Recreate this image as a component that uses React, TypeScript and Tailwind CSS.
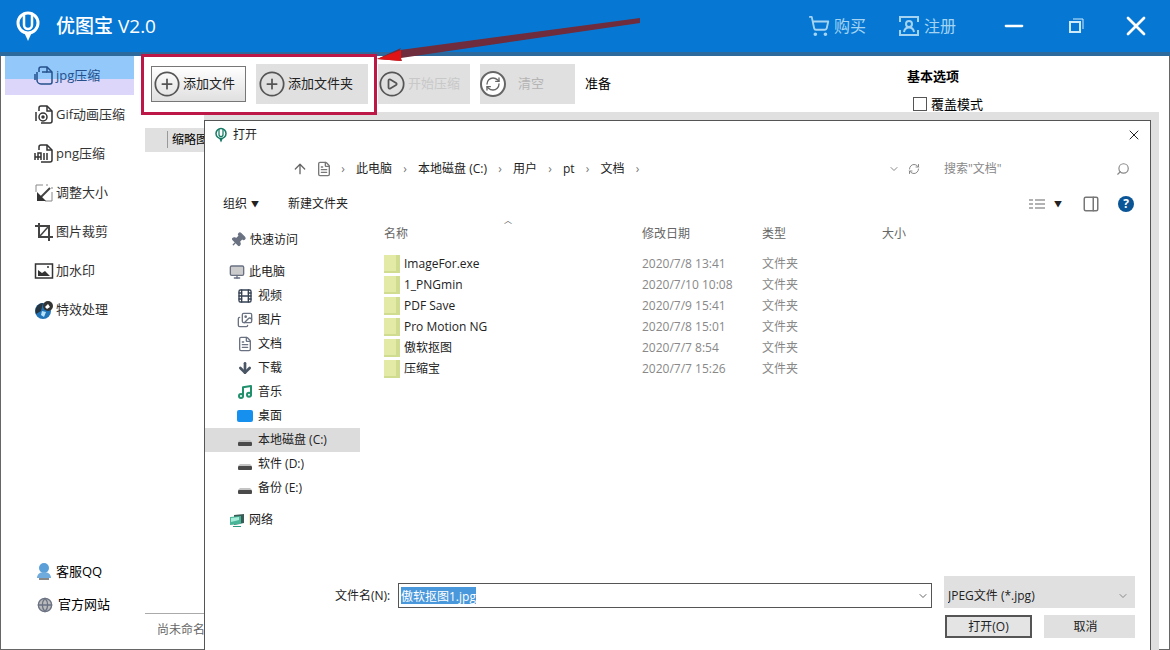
import React, { useState } from 'react';
import {
    ArrowDown,
    ArrowUp,
    ChevronDown,
    CirclePlay,
    CirclePlus,
    FileText,
    Film,
    Globe,
    Images,
    Minus,
    Monitor,
    Music,
    PanelRight,
    Pin,
    RefreshCw,
    Search,
    ShoppingCart,
    X,
} from 'lucide-react';

interface FileRow {
    name: string;
    date: string;
}

const files: FileRow[] = [
    { name: 'ImageFor.exe', date: '2020/7/8 13:41' },
    { name: '1_PNGmin', date: '2020/7/10 10:08' },
    { name: 'PDF Save', date: '2020/7/9 15:41' },
    { name: 'Pro Motion NG', date: '2020/7/8 15:01' },
    { name: '傲软抠图', date: '2020/7/7 8:54' },
    { name: '压缩宝', date: '2020/7/7 15:26' },
];

const crumbs = ['此电脑', '本地磁盘 (C:)', '用户', 'pt', '文档'];

function Logo({ className }: { className: string }) {
    return (
        <svg viewBox="0 0 24 32" className={className} fill="none" stroke="currentColor">
            <circle cx="12" cy="13" r="10" strokeWidth="3" />
            <path d="M8 4v11a4 4 0 0 0 8 0V4" strokeWidth="2.500" />
            <path d="M8 22h8l-4 9z" fill="currentColor" stroke="none" />
        </svg>
    );
}

// page outline, each format with its own mark over the left edge
function FileBadge({ kind }: { kind: 'jpg' | 'gif' | 'png' }) {
    return (
        <svg viewBox="0 0 20 20" className="h-5 w-5" fill="none" stroke="currentColor" strokeWidth="1.500">
            <path d="M5 6V3a2 2 0 0 1 2-2h6l5 5v10a2 2 0 0 1-2 2H7" />
            <path d="M13 1v5h5" />
            {kind === 'jpg' && <path d="M3 6v8a4 4 0 0 0 4 4M1 8v6M8 6h5" />}
            {kind === 'gif' && (
                <>
                    <circle cx="9" cy="12" r="4" />
                    <circle cx="9" cy="12" r="1" fill="currentColor" />
                    <path d="M2 7v9" />
                </>
            )}
            {kind === 'png' && <path d="M1 16V9M4 16V9h3v7M10 16V9M13 9v7M1 13h6" />}
        </svg>
    );
}

function ResizeIcon() {
    return (
        <svg viewBox="0 0 20 20" className="h-5 w-5" fill="none" stroke="#444" strokeWidth="1.500">
            <path d="M2 9V2h7M12 2h2M18 4v2M18 9v9h-7" strokeWidth="1" stroke="#888" />
            <path d="M16 5l-9 9" strokeWidth="2" />
            <path d="M3 9v9h9z" fill="#333" stroke="none" />
        </svg>
    );
}

function CropIcon() {
    return (
        <svg viewBox="0 0 20 20" className="h-5 w-5" fill="none" stroke="#444" strokeWidth="2">
            <path d="M5 1v14h14M1 4h14v15" />
            <path d="M6 14l8-9" strokeWidth="1.500" />
        </svg>
    );
}

function PictureIcon() {
    return (
        <svg viewBox="0 0 20 20" className="h-5 w-5" fill="none" stroke="#333" strokeWidth="1.500">
            <rect x="1.500" y="3" width="17" height="14" />
            <path d="M4 15V9l4 3 3-2 5 5z" fill="#333" stroke="none" />
            <path d="M13 6h2" />
        </svg>
    );
}

function EffectIcon() {
    return (
        <svg viewBox="0 0 20 20" className="h-5 w-5">
            <circle cx="9" cy="11" r="8" fill="#2274b8" />
            <path d="M9 3a8 8 0 0 0-7 11l5-3z" fill="#26343f" />
            <circle cx="14" cy="6" r="5" fill="#333" />
            <path d="M11 7l3-3 2 3-3 2z" fill="#fff" />
            <path d="M8 11l4 1-2 5-3-2z" fill="#b9e2fb" />
        </svg>
    );
}

function DriveIcon() {
    return (
        <svg viewBox="0 0 16 16" className="h-4 w-4">
            <path d="M3 8h10l2 2H1z" fill="#c4c4c4" />
            <rect x="1" y="10" width="14" height="4" rx="1" fill="#4a4a4a" />
        </svg>
    );
}

function NetworkIcon() {
    return (
        <svg viewBox="0 0 16 16" className="h-4 w-4">
            <path d="M5 3l10-1v9l-10 2z" fill="#3d5b56" />
            <path d="M1 5l11-1v8l-11 1z" fill="#49b598" />
            <path d="M2 6l8-1v3l-8 2z" fill="#a6ecd9" />
            <path d="M4 14h8v1H4z" fill="#2c9880" />
        </svg>
    );
}

const sideItems = [
    { label: 'jpg压缩', icon: <FileBadge kind="jpg" /> },
    { label: 'Gif动画压缩', icon: <FileBadge kind="gif" /> },
    { label: 'png压缩', icon: <FileBadge kind="png" /> },
    { label: '调整大小', icon: <ResizeIcon /> },
    { label: '图片裁剪', icon: <CropIcon /> },
    { label: '加水印', icon: <PictureIcon /> },
    { label: '特效处理', icon: <EffectIcon /> },
];

const places = [
    { label: '视频', icon: <Film className="h-4 w-4 text-gray-700" /> },
    { label: '图片', icon: <Images className="h-4 w-4 text-gray-500" /> },
    { label: '文档', icon: <FileText className="h-4 w-4 text-gray-500" /> },
    { label: '下载', icon: <ArrowDown className="h-4 w-4 text-gray-600" strokeWidth={4} /> },
    { label: '音乐', icon: <Music className="h-4 w-4 text-[#20906c]" strokeWidth={3} /> },
    { label: '桌面', icon: <span className="block h-3 w-4 rounded-xs bg-[#1690ee]" /> },
    { label: '本地磁盘 (C:)', icon: <DriveIcon /> },
    { label: '软件 (D:)', icon: <DriveIcon /> },
    { label: '备份 (E:)', icon: <DriveIcon /> },
];

function TitleBar() {
    return (
        <header className="flex h-14 shrink-0 items-center border-b-4 border-[#2c6a9e] bg-[#0678d4] pr-[18px] pl-4 text-white">
            <Logo className="h-8 w-6" />
            <h1 className="ml-4 text-[19px] font-medium">优图宝 V2.0</h1>
            <div className="ml-auto flex items-center text-base text-[#a4d4f2]">
                <button className="flex items-center gap-1">
                    <ShoppingCart className="h-[22px] w-[22px]" strokeWidth={2} />
                    购买
                </button>
                <button className="ml-8 flex items-center gap-1">
                    <svg viewBox="0 0 22 22" className="h-[22px] w-[22px]" fill="none" stroke="currentColor" strokeWidth="2">
                        <path d="M2 7V2h18v5M2 15v5h18v-5" />
                        <circle cx="11" cy="9" r="3" />
                        <path d="M6 17c1-6 9-6 10 0" />
                    </svg>
                    注册
                </button>
                <button aria-label="最小化" className="ml-11 text-white">
                    <Minus className="h-7 w-7" strokeWidth={2} />
                </button>
                <button aria-label="最大化" className="ml-10 text-[#cdeafa]">
                    <svg viewBox="0 0 16 16" className="h-4 w-4" fill="none" stroke="currentColor" strokeWidth="2">
                        <rect x="2" y="4" width="10" height="10" />
                        <path d="M5 1h10v10" strokeWidth="1" />
                    </svg>
                </button>
                <button aria-label="关闭" className="ml-9 text-white">
                    <X className="h-8 w-8" strokeWidth={2} />
                </button>
            </div>
        </header>
    );
}

function Sidebar() {
    const [active, setActive] = useState('jpg压缩');

    return (
        <nav className="flex w-[133px] shrink-0 flex-col pl-1 text-[13px]">
            {sideItems.map(item => (
                <button
                    key={item.label}
                    onClick={() => setActive(item.label)}
                    className={`flex h-[39px] items-center gap-[2px] pl-[29px] whitespace-nowrap
                        ${active === item.label ? 'bg-linear-to-b from-[#93c9fa] from-60% to-[#dcd6fa] to-60% text-[#25508c]' : 'text-[#333]'}`}
                >
                    {item.icon}
                    {item.label}
                </button>
            ))}
            <div className="mt-auto flex flex-col pb-7">
                <a href="#qq" className="flex h-[33px] items-center gap-[2px] pl-[29px] text-black">
                    <svg viewBox="0 0 20 20" className="h-5 w-5">
                        <circle cx="10" cy="6" r="5" fill="#5a9fd8" />
                        <path d="M3 16c0-8 14-8 14 0z" fill="#6fabdc" />
                        <path d="M5 16h10v2H5z" fill="#888" />
                    </svg>
                    客服QQ
                </a>
                <a href="#site" className="flex h-[33px] items-center gap-[5px] pl-8 text-black">
                    <Globe className="h-4 w-4 text-gray-500" fill="#bbb" />
                    官方网站
                </a>
            </div>
        </nav>
    );
}

function Toolbar() {
    return (
        <div className="flex items-center gap-[10px] text-[13px] whitespace-nowrap">
            <button className="flex h-9 w-[95px] items-center gap-[2px] border border-[#777] bg-linear-to-b from-white to-[#e0e0e0] pl-[1px] text-[#222]">
                <CirclePlus className="h-7 w-7 text-[#555]" strokeWidth={1.5} />
                添加文件
            </button>
            <button className="flex h-10 w-28 items-center gap-[2px] bg-[#e0e0e0] pl-[2px] text-[#222]">
                <CirclePlus className="h-7 w-7 text-[#555]" strokeWidth={1.5} />
                添加文件夹
            </button>
            <button disabled className="flex h-10 w-[92px] items-center gap-[2px] bg-[#e0e0e0] text-[#c8c8c8]">
                <CirclePlay className="h-7 w-7 text-[#555]" strokeWidth={1.5} />
                开始压缩
            </button>
            <button disabled className="flex h-10 w-[95px] items-center gap-3 bg-[#e0e0e0] text-[#b4b4b4]">
                <span className="flex h-[26px] w-[26px] items-center justify-center rounded-full border-2 border-[#666] bg-white">
                    <RefreshCw className="h-4 w-4 text-[#666]" />
                </span>
                清空
            </button>
            <span className="text-black">准备</span>
        </div>
    );
}

function OpenDialog() {
    const [fileName, setFileName] = useState('傲软抠图1.jpg');
    const [place, setPlace] = useState('本地磁盘 (C:)');

    return (
        <section
            role="dialog"
            aria-label="打开"
            className="absolute top-[120px] right-[19px] bottom-0 left-[204px] flex flex-col border border-b-0 border-[#555] bg-white text-xs text-[#222] shadow-[4px_-4px_0_4px_#e0e0e0]"
        >
            <div className="flex h-7 items-center pr-2 pl-2">
                <Logo className="h-4 w-4 text-[#157a63]" />
                <span className="ml-1">打开</span>
                <button aria-label="关闭对话框" className="ml-auto">
                    <X className="h-4 w-4" strokeWidth={1.5} />
                </button>
            </div>

            <div className="flex h-10 items-center pr-5 pl-[87px]">
                <ArrowUp className="h-4 w-4 text-[#666]" strokeWidth={2} />
                <FileText className="mr-2 ml-2 h-4 w-4 text-[#777]" strokeWidth={2} />
                <div className="flex items-center gap-[10px]">
                    {crumbs.map(crumb => (
                        <React.Fragment key={crumb}>
                            <span className="w-[6px] text-center text-[#777]">›</span>
                            <a href="#path">{crumb}</a>
                        </React.Fragment>
                    ))}
                    <span className="w-[6px] text-center text-[#777]">›</span>
                </div>
                <ChevronDown className="ml-auto h-3 w-3 text-[#888]" />
                <RefreshCw className="ml-2 h-3 w-3 text-[#888]" />
                <input
                    aria-label="搜索"
                    placeholder="搜索&quot;文档&quot;"
                    className="ml-6 w-[172px] outline-none placeholder:text-[#888]"
                />
                <Search className="h-[14px] w-[14px] -scale-x-100 text-[#888]" strokeWidth={2} />
            </div>

            <div className="flex h-[30px] items-center pr-4 pl-[18px]">
                <button className="flex items-center gap-1">
                    组织 <span className="text-[8px]">▼</span>
                </button>
                <button className="ml-[29px]">新建文件夹</button>
                <button aria-label="更改视图" className="ml-auto flex items-center gap-2">
                    <svg viewBox="0 0 18 14" className="h-[14px] w-[18px]" fill="none" stroke="#999">
                        <path d="M1 3h4M1 7h4M1 11h4M7 3h10M7 7h10M7 11h10" strokeWidth="1.500" />
                    </svg>
                    <span className="text-[8px]">▼</span>
                </button>
                <button aria-label="预览窗格" className="ml-5 text-[#777]">
                    <PanelRight className="h-[18px] w-[18px]" strokeWidth={2} />
                </button>
                <button
                    aria-label="帮助"
                    className="ml-[18px] flex h-4 w-4 items-center justify-center rounded-full bg-[#0a5596] font-bold text-white"
                >
                    ?
                </button>
            </div>

            <div className="flex min-h-0 flex-1">
                <nav className="w-[179px] shrink-0 pt-[9px]">
                    <a href="#quick" className="flex h-6 items-center gap-1 pl-[25px]">
                        <Pin className="h-4 w-4 rotate-45 text-gray-500" fill="currentColor" />
                        快速访问
                    </a>
                    <a href="#pc" className="mt-2 flex h-6 items-center gap-1 pl-6">
                        <Monitor className="h-4 w-4 text-gray-500" fill="#ccc" />
                        此电脑
                    </a>
                    {places.map(item => (
                        <button
                            key={item.label}
                            onClick={() => setPlace(item.label)}
                            className={`flex h-6 w-[155px] items-center gap-[5px] pl-8 ${place === item.label ? 'bg-[#dcdcdc]' : ''}`}
                        >
                            {item.icon}
                            {item.label}
                        </button>
                    ))}
                    <a href="#net" className="mt-2 flex h-6 items-center gap-1 pl-6">
                        <NetworkIcon />
                        网络
                    </a>
                </nav>

                <div className="flex-1">
                    <table className="w-full table-fixed text-left">
                        <thead className="text-[#666]">
                            <tr className="h-[34px] align-top">
                                <th className="relative w-[258px] pt-[7px] font-normal">
                                    名称
                                    <span className="absolute -top-1 left-[120px] text-[8px]">︿</span>
                                </th>
                                <th className="w-[120px] pt-[7px] font-normal">修改日期</th>
                                <th className="w-[120px] pt-[7px] font-normal">类型</th>
                                <th className="pt-[7px] font-normal">大小</th>
                            </tr>
                        </thead>
                        <tbody>
                            {files.map(file => (
                                <tr key={file.name} className="h-[21px] text-[#888]">
                                    <td className="text-[#222]">
                                        <span className="flex items-center gap-1">
                                            <span className="h-[18px] w-4 border-r-4 border-b-2 border-[#d0dc90] bg-[#e2eaa6]" />
                                            {file.name}
                                        </span>
                                    </td>
                                    <td>{file.date}</td>
                                    <td>文件夹</td>
                                    <td />
                                </tr>
                            ))}
                        </tbody>
                    </table>
                </div>
            </div>

            <footer className="flex flex-col gap-[7px] pr-[15px] pb-3 pl-[130px]">
                <div className="flex items-end">
                    <label htmlFor="file-name" className="leading-[25px] whitespace-nowrap">
                        文件名(N):
                    </label>
                    <div className="relative ml-auto h-[25px] w-[534px] border border-[#555] p-[3px] pl-[2px]">
                        <input
                            id="file-name"
                            value={fileName}
                            onChange={e => setFileName(e.target.value)}
                            className="block field-sizing-content h-full bg-[#4a98dc] text-white outline-none"
                        />
                        <ChevronDown className="absolute top-[6px] right-[2px] h-3 w-3 text-[#666]" />
                    </div>
                    <div className="relative ml-3 w-[191px]">
                        <select aria-label="文件类型" className="h-8 w-full appearance-none bg-[#e0e0e0] pt-2 pl-1 text-[#222]">
                            <option>JPEG文件 (*.jpg)</option>
                        </select>
                        <ChevronDown className="pointer-events-none absolute top-[14px] right-[6px] h-3 w-3 text-[#888]" />
                    </div>
                </div>
                <div className="flex justify-end gap-3">
                    <button className="h-[23px] w-[87px] border-2 border-[#555] bg-[#e4e4e4]">打开(O)</button>
                    <button className="h-[23px] w-[91px] bg-[#e0e0e0] pr-2">取消</button>
                </div>
            </footer>
        </section>
    );
}

export default function App() {
    return (
        <div className="relative flex min-h-screen flex-col overflow-hidden bg-white font-['Open_Sans','Noto_Sans_CJK_SC',sans-serif]">
            <TitleBar />
            <div className="flex flex-1 border-x border-b border-[#666]">
                <Sidebar />
                <main className="flex flex-1 flex-col pl-[11px]">
                    <div className="flex h-[72px] items-start justify-between pt-2 pl-[6px]">
                        <Toolbar />
                        <aside className="w-[262px] pt-[2px] text-[13px] text-black">
                            <h2 className="leading-5 font-bold">基本选项</h2>
                            <label className="mt-2 flex items-center gap-1 pl-[6px] leading-5">
                                <input type="checkbox" className="h-[14px] w-[14px] appearance-none border border-[#555]" />
                                覆盖模式
                            </label>
                        </aside>
                    </div>
                    <div className="h-6 w-[120px] bg-[#e0e0e0] pl-[22px] text-xs leading-6">
                        <span className="border-l border-[#999] pl-1">缩略图</span>
                    </div>
                    <div className="mt-auto h-9 w-[120px] border-t border-[#aaa] pt-2 pl-3 text-xs text-[#666]">尚未命名</div>
                </main>
            </div>

            <OpenDialog />

            {/* red callout around the two add buttons */}
            <div className="pointer-events-none absolute top-[54px] left-[141px] h-[61px] w-[236px] border-3 border-[#bd1748]" />
            <svg viewBox="0 0 270 50" className="pointer-events-none absolute top-[14px] left-[372px] h-[50px] w-[270px]">
                <path d="M268 4L28 36l1-2L5 45l25 2-1-3L268 9z" fill="#6e2c3c" />
                <path d="M5 45l24-9v11z" fill="#e01414" />
            </svg>
        </div>
    );
}
